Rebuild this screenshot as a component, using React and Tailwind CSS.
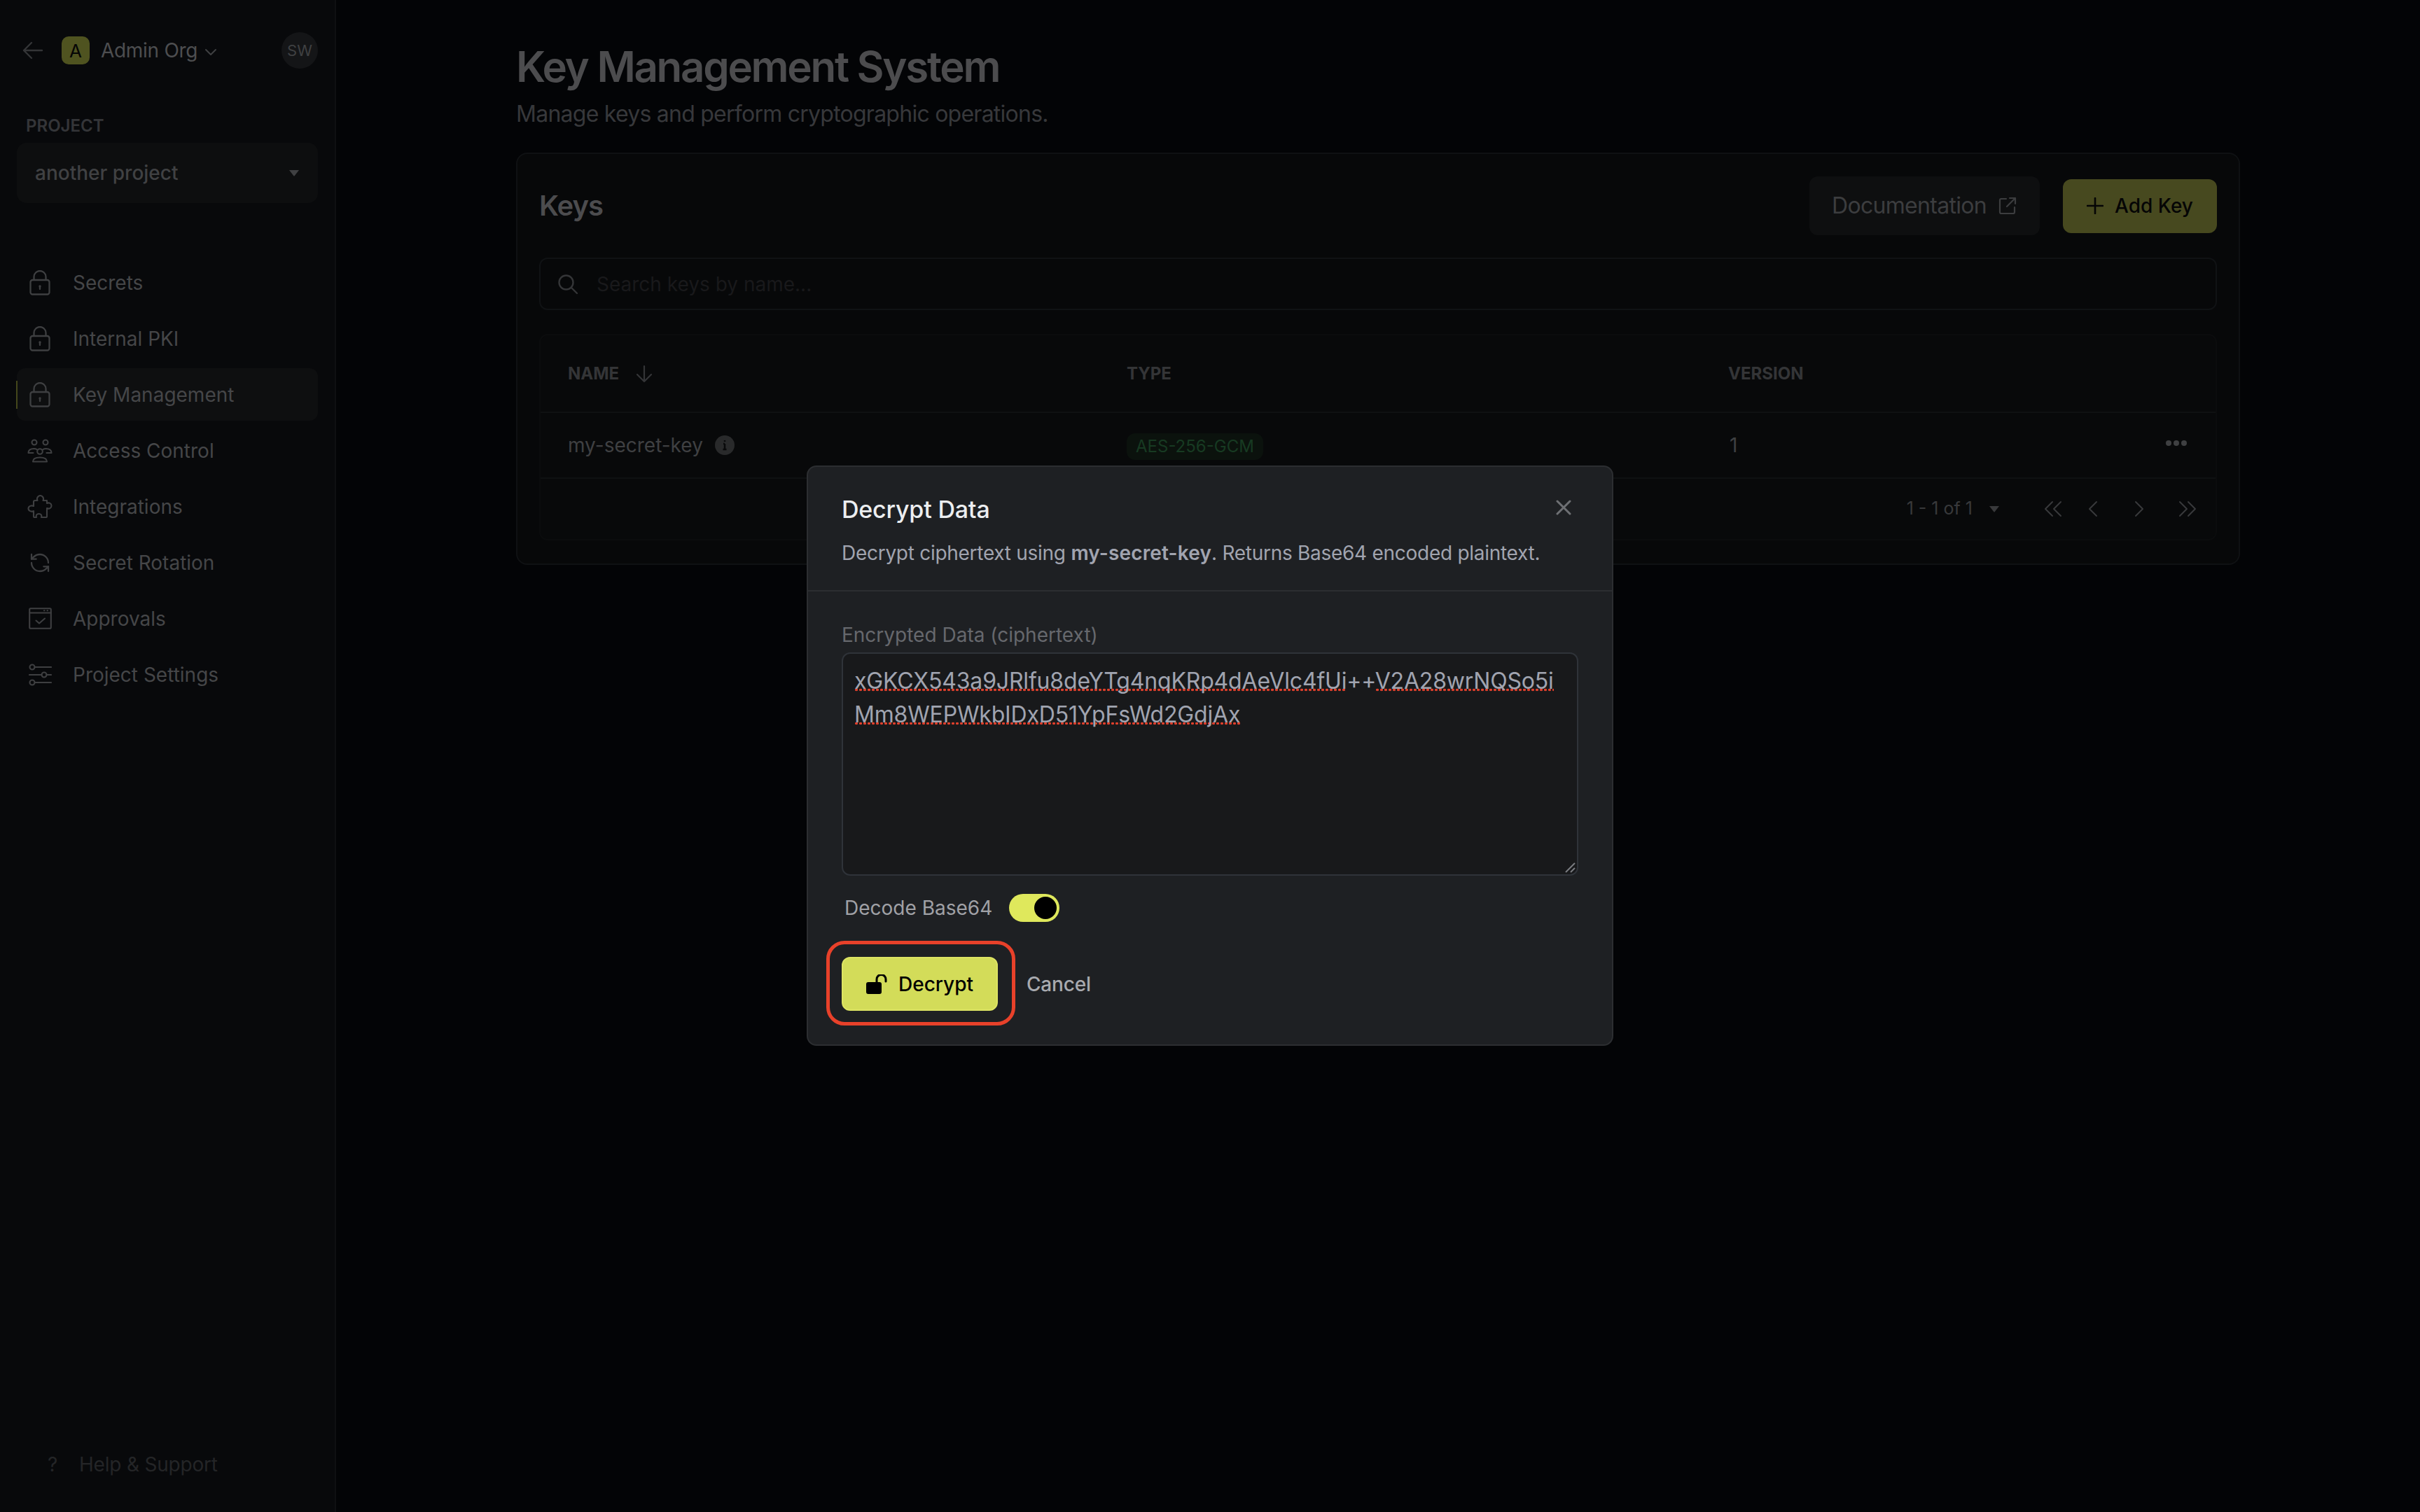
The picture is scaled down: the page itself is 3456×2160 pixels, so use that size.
import React from "react";

const S = ({ w = 24, h = 24, vb = "0 0 24 24", sw = 1.6, cls = "", children }) => (
  <svg width={w} height={h} viewBox={vb} fill="none" stroke="currentColor" strokeWidth={sw} strokeLinecap="round" strokeLinejoin="round" className={cls}>
    {children}
  </svg>
);

const LockIco = () => (
  <S w={30} h={36} vb="0 0 30 36" sw={2.3}>
    <rect x="1.500" y="14" width="27" height="20.500" rx="3" />
    <path d="M6.500 14V9.500a8.500 8.500 0 0 1 17 0V14" />
    <circle cx="15" cy="23" r="1.700" fill="currentColor" stroke="none" />
    <path d="M15 24v3" />
  </S>
);
const GroupIco = () => (
  <S w={36} h={34} vb="0 0 36 34" sw={2.1}>
    <circle cx="10" cy="5" r="3.500" />
    <circle cx="26" cy="5" r="3.500" />
    <circle cx="18" cy="18" r="3.800" />
    <path d="M1.500 20c0-4 3-6 8-6 1.500 0 3 .3 4 1M34.500 20c0-4-3-6-8-6-1.500 0-3 .3-4 1M1.500 20h7M34.500 20h-7" />
    <path d="M8 32.500c0-4 4-6 10-6s10 2 10 6z" />
  </S>
);
const PuzzleIco = () => (
  <S w={36} h={33} vb="0 0 36 33" sw={2.1}>
    <path d="M11 8h3.500c-1.500-3 .5-7 4-7s5.500 4 4 7H28v4c3-1.500 6.500 0 6.500 3.500S31 20.500 28 19v12a1 1 0 0 1-1 1h-7c1-3-.5-5-3.500-5S12 29 13 32h-3a1 1 0 0 1-1-1v-8c-3 1.500-7.500 0-7.500-3.500S6 14.500 9 16v-6a2 2 0 0 1 2-2z" />
  </S>
);
const RotateIco = () => (
  <S w={32} h={32} vb="0 0 24 24" sw={1.700}>
    <path d="M21 12a9 9 0 0 0-9-9 9.750 9.750 0 0 0-6.740 2.740L3 8" />
    <path d="M3 3v5h5" />
    <path d="M3 12a9 9 0 0 0 9 9 9.750 9.750 0 0 0 6.740-2.740L21 16" />
    <path d="M16 16h5v5" />
  </S>
);
const ApprovalIco = () => (
  <S w={33} h={31} vb="0 0 33 31" sw={2.1}>
    <rect x="1.200" y="1.200" width="30.600" height="28.600" rx="1.500" />
    <path d="M1.200 7.500h30.600" />
    <path d="M22 4.300h.5M26.500 4.300h.5" />
    <path d="M10.500 18.500l4.500 4 8-7" />
  </S>
);
const SlidersIco = () => (
  <S w={33} h={32} vb="0 0 33 32" sw={2.100}>
    <circle cx="5" cy="5" r="3.500" />
    <path d="M8.500 5H32" />
    <circle cx="22" cy="16" r="3.500" />
    <path d="M1 16h17.500M25.500 16H32" />
    <circle cx="5" cy="27" r="3.500" />
    <path d="M8.500 27H32" />
  </S>
);

const navItems = [
  ["Secrets", LockIco],
  ["Internal PKI", LockIco],
  ["Key Management", LockIco, true],
  ["Access Control", GroupIco],
  ["Integrations", PuzzleIco],
  ["Secret Rotation", RotateIco],
  ["Approvals", ApprovalIco],
  ["Project Settings", SlidersIco],
];

const Caret = ({ cls = "" }) => (
  <svg width="16" height="10" viewBox="0 0 16 10" className={cls}>
    <path d="M1 1h14L8.600 9.200a1 1 0 0 1-1.200 0z" fill="currentColor" />
  </svg>
);

function Sidebar() {
  return (
    <aside className="w-[480px] h-full shrink-0 flex flex-col bg-[#08090b] border-r-[2px] border-[#0f1012] px-[24px]">
      <div className="flex items-center h-[52px] mt-[46px]">
        <S w={30} h={26} vb="0 0 30 26" sw={2.400} cls="ml-[8px] text-[#343537]">
          <path d="M28 13H2M13 2L2 13l11 11" />
        </S>
        <div className="ml-[26px] w-[40px] h-[40px] rounded-[10px] bg-[#4f5320] flex items-center justify-center text-[#050505] text-[26px]">A</div>
        <span className="ml-[16px] text-[28px] tracking-[-0.3px] text-[#4d4e50]">Admin Org</span>
        <S w={18} h={12} vb="0 0 18 12" sw={2} cls="ml-[10px] mt-[6px] text-[#3f4042]">
          <path d="M2 2l7 7 7-7" />
        </S>
        <div className="ml-auto w-[52px] h-[52px] rounded-full bg-[#141517] flex items-center justify-center text-[22px] text-[#3f4042]">SW</div>
      </div>
      <div className="mt-[66px] ml-[13px] text-[24px] leading-[32px] font-semibold text-[#343538]">PROJECT</div>
      <div className="mt-[8px] h-[86px] rounded-[14px] bg-[#0d0e0f] flex items-center pl-[26px] pr-[26px] text-[28px] font-medium text-[#404143]">
        <span>another project</span>
        <Caret cls="ml-auto text-[#3f4042]" />
      </div>
      <nav className="mt-[76px] flex flex-col gap-[5px]">
        {navItems.map(([label, Ico, active]) => (
          <div key={label} className={`relative h-[75px] flex items-center rounded-[12px] text-[28px] text-[#454648] ${active ? "bg-[#0e0f10]" : ""}`}>
            {active && <span className="absolute left-[-1px] top-[18px] h-[40px] w-[2px] bg-[#44471b]" />}
            <span className="w-[66px] flex justify-center text-[#3e3f41]"><Ico /></span>
            <span className="ml-[14px]">{label}</span>
          </div>
        ))}
      </nav>
      <div className="mt-auto mb-[48px] flex items-center h-[40px] text-[28px] tracking-[-0.2px] text-[#242527]">
        <span className="ml-[44px] w-[45px] text-[#242527]">?</span>
        <span>Help &amp; Support</span>
      </div>
    </aside>
  );
}

function Chev({ d, cls = "" }) {
  return (
    <S w={28} h={28} vb="0 0 28 28" sw={2} cls={cls}>
      <path d={d} />
    </S>
  );
}

function Main() {
  return (
    <main className="flex-1 h-full flex justify-center bg-[#030406]">
      <div className="w-[2462px] pt-[59px]">
        <h1 className="text-[60px] leading-[72px] font-semibold text-[#4c4c4e] tracking-[-2.3px]">Key Management System</h1>
        <p className="mt-[8px] text-[32px] leading-[48px] text-[#37383b] tracking-[-0.75px]">Manage keys and perform cryptographic operations.</p>
        <section className="mt-[31px] h-[589px] rounded-[16px] border-[2px] border-[#0f1113] bg-[#070809] px-[31px] pt-[32px]">
          <div className="flex items-center justify-between h-[84px]">
            <h2 className="text-[40px] font-semibold tracking-[-1px] text-[#4c4c4e]">Keys</h2>
            <div className="flex items-center gap-[33px]">
              <button className="h-[84px] w-[329px] rounded-[12px] bg-[#0e0f10] flex items-center justify-center gap-[16px] text-[32px] tracking-[-0.7px] text-[#3c3d3f]">
                Documentation
                <S w={28} h={28} vb="0 0 28 28" sw={2.200} cls="text-[#3c3d3f]">
                  <path d="M12 4H5a2 2 0 0 0-2 2v17a2 2 0 0 0 2 2h17a2 2 0 0 0 2-2v-7" />
                  <path d="M17 3h8v8M25 3L13 15" />
                </S>
              </button>
              <button className="h-[77px] w-[220px] rounded-[12px] bg-[#47491f] flex items-center justify-center gap-[16px] text-[28px] font-medium text-[#050505]">
                <S w={24} h={24} sw={2.600}><path d="M12 1v22M1 12h22" /></S>
                Add Key
              </button>
            </div>
          </div>
          <div className="mt-[32px] h-[75px] rounded-[12px] border-[2px] border-[#101214] flex items-center pl-[24px] text-[28px] text-[#19191b]">
            <S w={30} h={30} vb="0 0 30 30" sw={2.400} cls="text-[#343537]">
              <circle cx="12.500" cy="12.500" r="10" /><path d="M20 20l8 8" />
            </S>
            <span className="ml-[26px]">Search keys by name...</span>
          </div>
          <div className="mt-[34px] h-[295px] rounded-[12px] border-[2px] border-[#0b0c0d] bg-[#08090a]">
            <div className="h-[111px] border-b-[2px] border-[#0f1112] grid grid-cols-[798px_859px_1fr] items-center pl-[39px] text-[24px] font-bold text-[#343537]">
              <div className="flex items-center gap-[24px]">
                NAME
                <S w={24} h={26} vb="0 0 24 26" sw={2.200} cls="text-[#343537]"><path d="M12 2v22M2 14l10 10 10-10" /></S>
              </div>
              <div>TYPE</div>
              <div>VERSION</div>
            </div>
            <div className="h-[94px] border-b-[2px] border-[#0f1112] grid grid-cols-[798px_859px_1fr_80px] items-center pl-[39px] text-[28px] text-[#3f4042]">
              <div className="flex items-center gap-[17px]">
                my-secret-key
                <svg width="28" height="28" viewBox="0 0 28 28" className="text-[#292a2b]">
                  <circle cx="14" cy="14" r="14" fill="currentColor" />
                  <path d="M14 12v8M14 7v2M12 12h2M11.500 20h5" stroke="#08090a" strokeWidth="2.500" fill="none" />
                </svg>
              </div>
              <div>
                <span className="inline-flex items-center h-[38px] rounded-[12px] px-[13px] bg-[#0b120d] text-[24px] text-[#173a22]">AES-256-GCM</span>
              </div>
              <div className="pl-[2px]">1</div>
              <div className="flex gap-[3px] -mt-[6px] ml-[9px]">
                <span className="w-[8px] h-[8px] rounded-full bg-[#3f4042]" />
                <span className="w-[8px] h-[8px] rounded-full bg-[#3f4042]" />
                <span className="w-[8px] h-[8px] rounded-full bg-[#3f4042]" />
              </div>
            </div>
            <div className="h-[86px] flex items-center justify-end pr-[26px] text-[25px] text-[#38393b]">
              <span>1 - 1 of 1</span>
              <Caret cls="ml-[23px] text-[#38393b]" />
              <Chev d="M13 4L3 14l10 10M25 4L15 14l10 10" cls="ml-[62px]" />
              <Chev d="M18 4L8 14l10 10" cls="ml-[30px]" />
              <Chev d="M10 4l10 10-10 10" cls="ml-[36px]" />
              <Chev d="M3 4l10 10L3 24M15 4l10 10-10 10" cls="ml-[42px]" />
            </div>
          </div>
        </section>
      </div>
    </main>
  );
}

const Bad = ({ children }) => (
  <span className="bg-[radial-gradient(circle,#e0402c_1.7px,transparent_2.1px)] bg-[length:6px_5px] bg-repeat-x bg-[position:0_30px]">{children}</span>
);

function Modal() {
  return (
    <div className="absolute left-[1152px] top-[665px] w-[1152px] rounded-[14px] border-[2px] border-[#2c2e31] bg-[#1e2023]">
      <div className="relative px-[48px] pt-[37px] pb-[33px] border-b-[2px] border-[#2c2e31]">
        <div className="text-[34px] leading-[48px] font-medium tracking-[-0.2px] text-[#eceef0]">Decrypt Data</div>
        <div className="mt-[18px] text-[28px] leading-[40px] tracking-[-0.28px] text-[#a1a4af]">
          Decrypt ciphertext using <b className="font-semibold tracking-[0.15px]">my-secret-key</b>. Returns Base64 encoded plaintext.
        </div>
        <S w={22} h={22} vb="0 0 22 22" sw={3} cls="absolute right-[58px] top-[47px] text-[#6e7074]">
          <path d="M2 2l18 18M20 2L2 20" />
        </S>
      </div>
      <div className="px-[48px] pt-[42px] pb-[48px]">
        <div className="text-[28px] leading-[40px] text-[#66686d]">Encrypted Data (ciphertext)</div>
        <div className="relative mt-[5px] h-[319px] rounded-[12px] border-[2px] border-[#2f3339] bg-[#18191b] px-[16px] pt-[15px] text-[32px] leading-[48px] tracking-[-0.17px] text-[#a0a4b0]">
          <div><Bad>xGKCX543a9JRlfu8deYTg4nqKRp4dAeVlc4fUi</Bad>++<Bad>V2A28wrNQSo5i</Bad></div>
          <div><Bad>Mm8WEPWkbIDxD51YpFsWd2GdjAx</Bad></div>
          <svg width="16" height="16" viewBox="0 0 16 16" className="absolute right-[2px] bottom-[2px] text-[#7a7c80]">
            <path d="M15 2L2 15M15 9l-6 6" stroke="currentColor" strokeWidth="2" />
          </svg>
        </div>
        <div className="mt-[26px] flex items-center h-[40px] pl-[4px]">
          <span className="text-[28px] text-[#a0a1a6]">Decode Base64</span>
          <span className="ml-[24px] w-[72px] h-[40px] rounded-full bg-[#dfe85c] flex items-center justify-end pr-[4px]">
            <span className="w-[32px] h-[32px] rounded-full bg-black" />
          </span>
        </div>
        <div className="mt-[50px] flex items-center">
          <div className="relative">
            <span className="absolute left-[-22px] right-[-25px] top-[-23px] bottom-[-21px] rounded-[26px] border-[5px] border-[#e8412a]" />
            <button className="h-[77px] w-[223px] rounded-[12px] bg-[#d3dc59] border-[2px] border-[#dde463] flex items-center justify-center gap-[14px] text-[28px] font-medium text-black">
              <svg width="32" height="28" viewBox="0 0 32 28">
                <rect x="0" y="11" width="22" height="17" rx="3" fill="currentColor" />
                <path d="M15 11V7a6.500 6.500 0 0 1 13 0v3" fill="none" stroke="currentColor" strokeWidth="3" strokeLinecap="round" />
              </svg>
              Decrypt
            </button>
          </div>
          <span className="ml-[41px] text-[28px] font-medium tracking-[-0.2px] text-[#a8aaaf]">Cancel</span>
        </div>
      </div>
    </div>
  );
}

export default function App() {
  return (
    <div className="relative w-[3456px] h-[2160px] overflow-hidden flex bg-[#030406] [font-family:Inter,'Liberation_Sans',sans-serif]">
      <Sidebar />
      <Main />
      <Modal />
    </div>
  );
}
